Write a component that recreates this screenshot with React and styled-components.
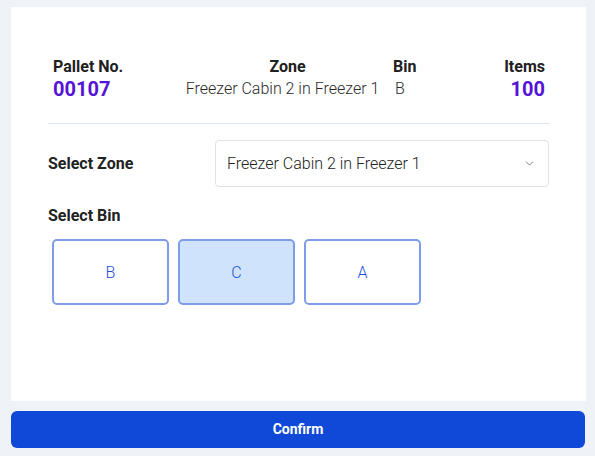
import React, { useState } from "react";
import styled, { createGlobalStyle } from "styled-components";
import { ChevronDown } from "lucide-react";

const GlobalStyle = createGlobalStyle`
  html, body {
    margin: 0;
    padding: 0;
    background: #eff3f7;
    font-family: "Roboto", "Liberation Sans", sans-serif;
  }
  * {
    box-sizing: border-box;
  }
`;

const Page = styled.div`
  display: flex;
  flex-direction: column;
  gap: 10px;
  padding: 7px 9px 8px 11px;
  width: 595px;
  height: 456px;
`;

const Card = styled.div`
  background: #ffffff;
  height: 394px;
  padding: 49px 36px 0 37px;
  display: flex;
  flex-direction: column;
`;

const InfoRow = styled.div`
  display: grid;
  grid-template-columns: 119px 221px 1fr 80px;
  padding: 0 5px 22px 5px;
  border-bottom: 1px solid #dbe5f1;
`;

const InfoCol = styled.div`
  display: flex;
  flex-direction: column;
  align-items: ${(p) => p.$align || "flex-start"};
`;

const InfoLabel = styled.span`
  font-size: 16px;
  font-weight: 700;
  color: #202020;
  line-height: 21px;
  padding-left: ${(p) => p.$indent || 0}px;
`;

const InfoValue = styled.span`
  font-size: ${(p) => (p.$accent ? "20px" : "16px")};
  font-weight: ${(p) => (p.$accent ? 700 : 300)};
  color: ${(p) => (p.$accent ? "#5513d6" : "#2a2a2a")};
  line-height: 24px;
  padding-left: ${(p) => p.$indent || 0}px;
`;

const SelectRow = styled.div`
  display: grid;
  grid-template-columns: 167px 1fr;
  align-items: center;
  margin-top: 16px;
`;

const FieldLabel = styled.label`
  font-size: 16px;
  font-weight: 700;
  color: #222;
`;

const SelectBox = styled.div`
  height: 47px;
  border: 1px solid #e2e2e2;
  border-radius: 4px;
  display: flex;
  align-items: center;
  justify-content: space-between;
  padding: 0 12px 0 11px;
  font-size: 16px;
  font-weight: 300;
  color: #222;
  margin-right: 1px;
`;

const BinSection = styled.div`
  margin-top: 19px;
  display: flex;
  flex-direction: column;
  gap: 14px;
`;

const BinGrid = styled.div`
  display: flex;
  gap: 9px;
  padding-left: 4px;
`;

const BinButton = styled.button`
  width: 117px;
  height: 66px;
  border: 2px solid #7d9deb;
  border-radius: 5px;
  background: ${(p) => (p.$active ? "#cfe3fd" : "#ffffff")};
  color: #1f4fd8;
  font-family: "Roboto", "Liberation Sans", sans-serif;
  font-size: 16px;
  font-weight: 300;
  cursor: pointer;
`;

const ConfirmButton = styled.button`
  height: 37px;
  width: 574px;
  border: none;
  border-radius: 6px;
  background: #1049d8;
  color: #ffffff;
  font-family: "Roboto", "Liberation Sans", sans-serif;
  font-size: 14px;
  font-weight: 700;
  padding-bottom: 2px;
  cursor: pointer;
`;

export default function App() {
  const [bin, setBin] = useState("C");
  const bins = ["B", "C", "A"];

  return (
    <>
      <GlobalStyle />
      <Page>
        <Card>
          <InfoRow>
            <InfoCol>
              <InfoLabel>Pallet No.</InfoLabel>
              <InfoValue $accent>00107</InfoValue>
            </InfoCol>
            <InfoCol $align="center">
              <InfoLabel $indent={10}>Zone</InfoLabel>
              <InfoValue>Freezer Cabin 2 in Freezer 1</InfoValue>
            </InfoCol>
            <InfoCol>
              <InfoLabel>Bin</InfoLabel>
              <InfoValue $indent={2}>B</InfoValue>
            </InfoCol>
            <InfoCol $align="flex-end">
              <InfoLabel>Items</InfoLabel>
              <InfoValue $accent>100</InfoValue>
            </InfoCol>
          </InfoRow>

          <SelectRow>
            <FieldLabel>Select Zone</FieldLabel>
            <SelectBox>
              <span>Freezer Cabin 2 in Freezer 1</span>
              <ChevronDown size={13} strokeWidth={1.5} color="#666" />
            </SelectBox>
          </SelectRow>

          <BinSection>
            <FieldLabel>Select Bin</FieldLabel>
            <BinGrid>
              {bins.map((b) => (
                <BinButton key={b} $active={bin === b} onClick={() => setBin(b)}>
                  {b}
                </BinButton>
              ))}
            </BinGrid>
          </BinSection>
        </Card>
        <ConfirmButton>Confirm</ConfirmButton>
      </Page>
    </>
  );
}
